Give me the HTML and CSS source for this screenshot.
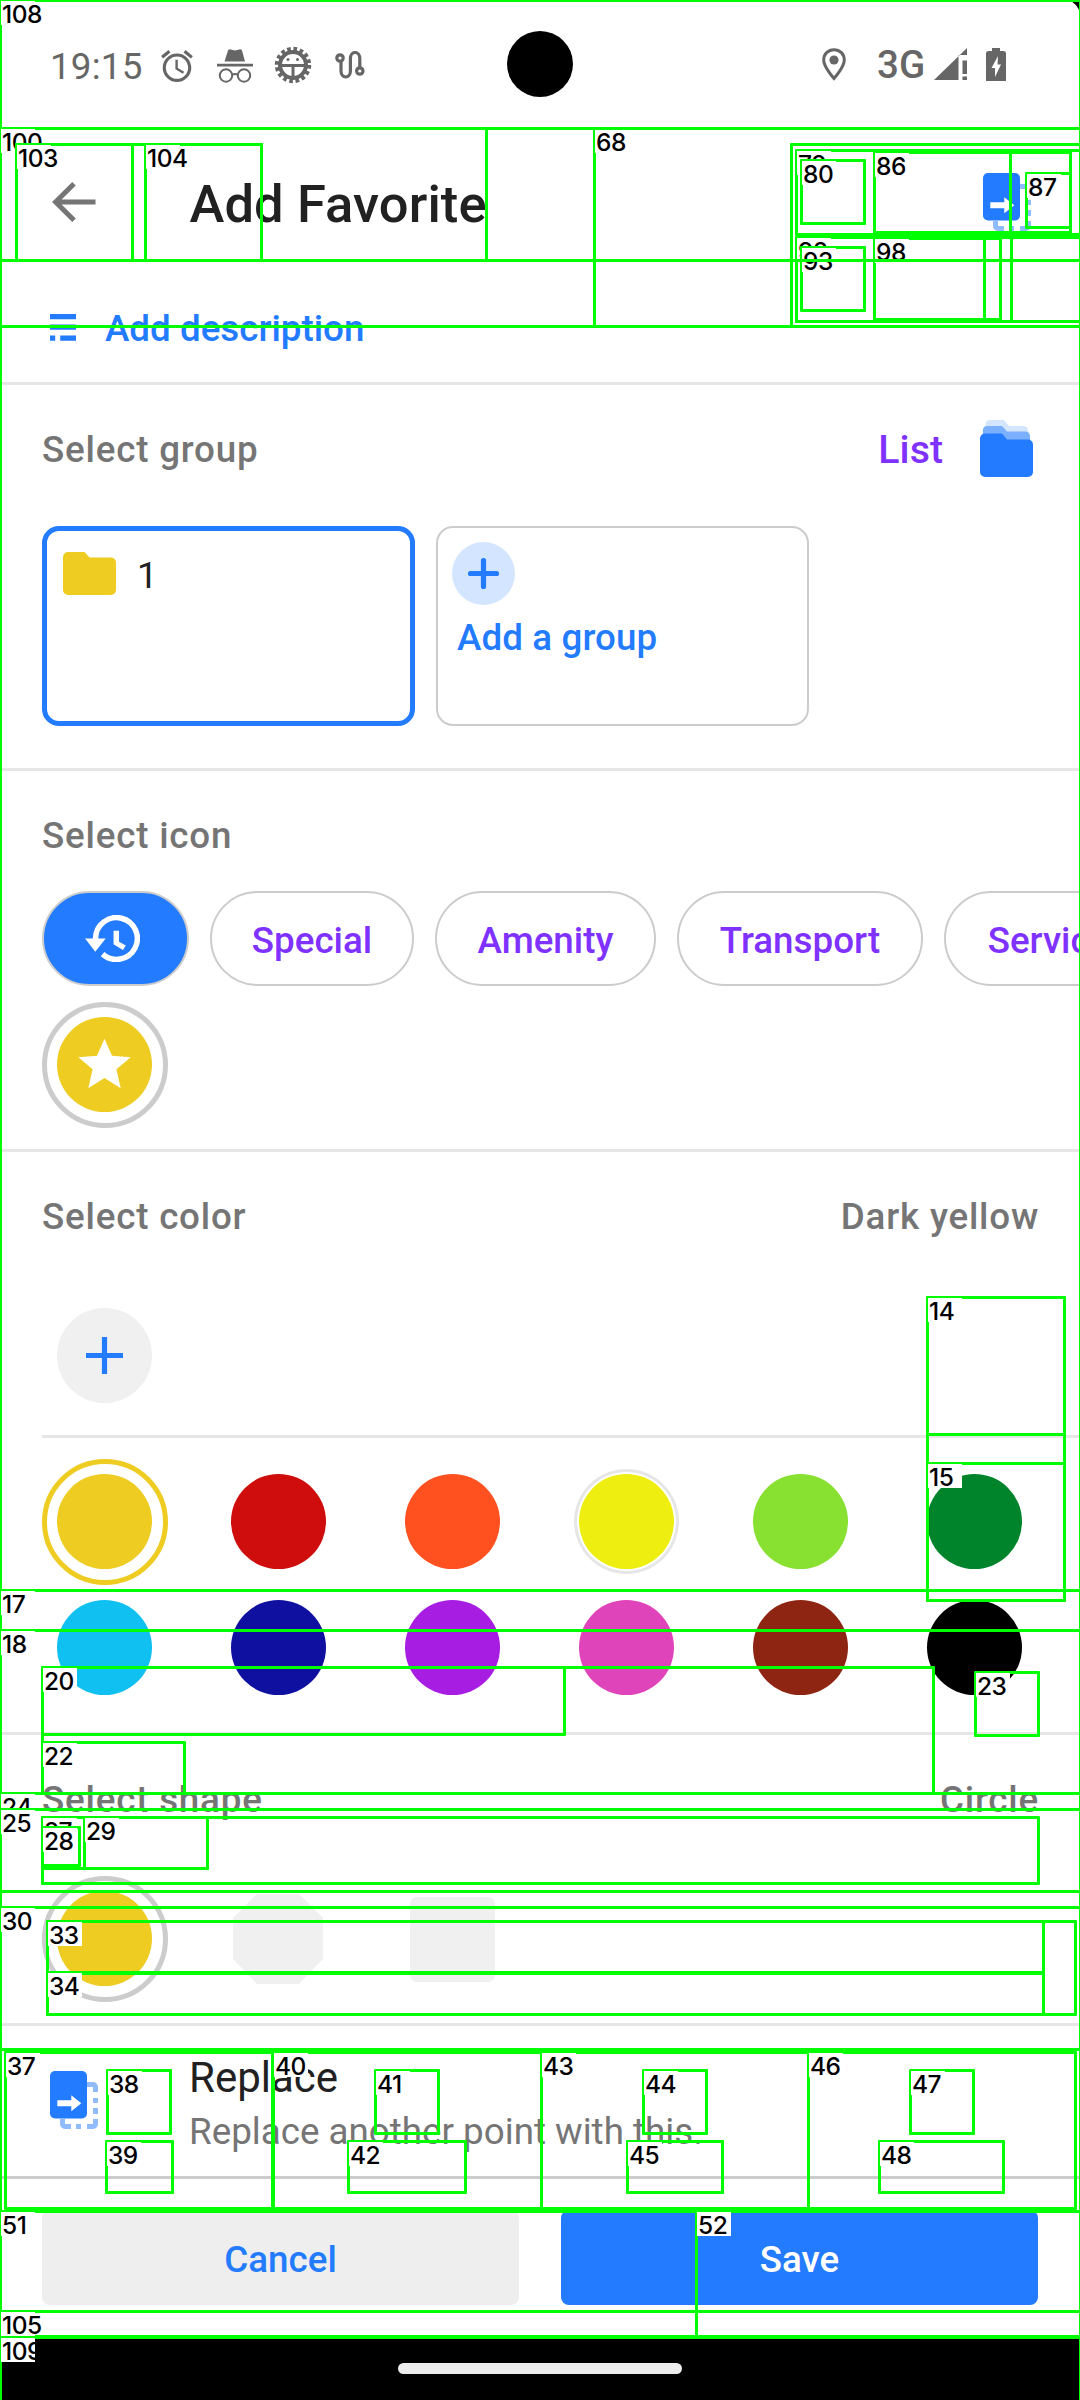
FILE: index.html
```
<!DOCTYPE html>
<html lang="en">
<head>
<meta charset="utf-8">
<title>Add Favorite</title>
<link rel="stylesheet" href="styles.css">
</head>
<body>
<svg class="defs" aria-hidden="true">
  <symbol id="replace" viewBox="0 0 48 58">
    <g fill="#90bcff"><path d="M37 11h6a5 5 0 0 1 5 5v5h-5v-5h-6zM43 27h5v5h-5zM43 37h5v6h-5zM43 48h5v5a5 5 0 0 1-5 5h-6v-5h6zM26 53h5v5h-5zM10 48h5v5h6v5h-6a5 5 0 0 1-5-5z"/></g>
    <rect width="37" height="47.5" rx="5" fill="#237bff"/>
    <path d="M7.3 29.3h14V24.3l10 8-10 8v-5h-14z" fill="#fff"/>
  </symbol>
</svg>

<div class="screen">
  <header class="status">
    <span class="time">19:15</span>
    <svg class="alarm" viewBox="2 1.86 20 20.14" width="32" height="32"><path d="M22 5.72l-4.6-3.86-1.29 1.53 4.6 3.86L22 5.72zM7.88 3.39L6.6 1.86 2 5.71l1.29 1.53 4.59-3.85zM12.5 8H11v6l4.75 2.85.75-1.23-4-2.37V8zM12 4c-4.97 0-9 4.03-9 9s4.02 9 9 9c4.97 0 9-4.03 9-9s-4.03-9-9-9zm0 16c-3.87 0-7-3.13-7-7s3.13-7 7-7 7 3.13 7 7-3.13 7-7 7z"/></svg>
    <svg class="incognito" viewBox="0 0 36 34" width="36" height="34"><path d="M11 1.6q.8-1.6 2.6-1.2l4.4 1 4.4-1q1.8-.4 2.6 1.2L28 12.6H7.5zM0 14.7h36v2.8H0z"/><g fill="none" stroke="#666" stroke-width="2"><circle cx="9" cy="26.5" r="6.2"/><circle cx="27" cy="26.5" r="6.2"/><path d="M15 26q3-1.8 6 0"/></g></svg>
    <svg class="bug" viewBox="0 0 38 38" width="38" height="38"><g fill="none" stroke="#666"><circle cx="19" cy="19" r="16" stroke-width="4.4" stroke-dasharray="3.6 2.68"/><circle cx="19" cy="19" r="13" stroke-width="4"/><path d="M5 19.5h28M19 19.5V34" stroke-width="3"/></g><circle cx="14" cy="13.5" r="1.5"/><circle cx="23.5" cy="13.5" r="1.5"/></svg>
    <svg class="route" viewBox="0 0 30 28" width="30" height="28"><g fill="none" stroke="#666" stroke-width="3.2"><circle cx="5" cy="7" r="3.2"/><path d="M6 10V20a4.7 6 0 0 0 9.4 0V7.5a4.7 6 0 0 1 9.4 0V17"/><circle cx="24.8" cy="20" r="3.2"/></g></svg>
    <span class="spacer"></span>
    <svg class="pin" viewBox="0 0 24 33" width="24" height="33"><path d="M12 1.7C6 1.7 1.7 6.2 1.7 12 1.7 19 12 30.5 12 30.5S22.3 19 22.3 12C22.3 6.2 18 1.7 12 1.7z" fill="none" stroke="#666" stroke-width="3"/><circle cx="12" cy="12" r="4.6"/></svg>
    <span class="net">3G</span>
    <svg class="signal" viewBox="0 0 33 32" width="33" height="32"><path d="M0 32L33 0V7H24.5V32zM28.5 12.5h4.5V26h-4.5zM28.5 28.5h4.5V32h-4.5z"/></svg>
    <svg class="battery" viewBox="0 0 20 33" width="20" height="33"><path d="M6 0h8v3h3.5A2.5 2.5 0 0 1 20 5.5V33H0V5.5A2.5 2.5 0 0 1 2.5 3H6z"/><path d="M12 8L5.500 20H9v9l6-12.5h-3.5z" fill="#fff"/></svg>
    <span class="camera"></span>
    <svg class="corner" viewBox="0 0 12 14" width="12" height="14"><path d="M0 0H12V14Q10.5 3.5 0 0z" fill="#000"/></svg>
  </header>

  <div class="toolbar">
    <svg viewBox="0 0 44 40" width="44" height="40"><path d="M43.5 20H4M22 1.800L3.600 20 22 38.200" fill="none" stroke="#757575" stroke-width="5"/></svg>
    <h1>Add Favorite</h1>
    <svg class="toolbar-action" width="48" height="58"><use href="#replace"/></svg>
  </div>

  <div class="describe">
    <svg viewBox="0 0 26 27" width="26" height="27"><path d="M0 0h26v5.2H0zM0 10.5h26v5.2H0zM0 21.5h5.2v5.2H0zM10.2 21.5H26v5.2H10.2z" fill="#237bff"/></svg>
    <span>Add description</span>
  </div>

  <section class="group">
    <div class="head">
      <h2>Select group</h2>
      <div class="list">List
        <svg viewBox="0 0 53 57" width="53" height="57"><path d="M10 0h14l5 6h14q5 0 5 5v10H5.500V5Q5.500 0 10 0z" fill="#d3e5ff"/><path d="M7.500 6H22l5 5.500h18q5 0 5 5V26H2.800V11q0-5 4.700-5z" fill="#7bb0ff"/><path d="M5 13.500h17l5 6h21a5 5 0 0 1 5 5V52a5 5 0 0 1-5 5H5a5 5 0 0 1-5-5V18.500a5 5 0 0 1 5-5z" fill="#237bff"/></svg>
      </div>
    </div>
    <div class="cards">
      <div class="card selected">
        <div class="card-row">
          <svg viewBox="0 0 53 43" width="53" height="43"><path d="M5 0h16.500l5 5.500H48a5 5 0 0 1 5 5V38a5 5 0 0 1-5 5H5a5 5 0 0 1-5-5V5a5 5 0 0 1 5-5z" fill="#eecc22"/></svg>
          <span>1</span>
        </div>
      </div>
      <div class="card add">
        <svg viewBox="0 0 63 63" width="63" height="63"><circle cx="31.5" cy="31.5" r="31.5" fill="#d3e5ff"/><path d="M18.500 31.500h26M31.500 18.500v26" stroke="#237bff" stroke-width="5.2" stroke-linecap="round"/></svg>
        <span>Add a group</span>
      </div>
    </div>
  </section>

  <section class="icons">
    <div class="head"><h2>Select icon</h2></div>
    <div class="chips">
      <div class="chip on"><svg viewBox="1 3 21 18" width="55" height="47"><path d="M5 12.500V12A8 8 0 1 1 7.700 18" fill="none" stroke="#fff" stroke-width="2.1"/><path d="M1 12h7.900L4.900 17.100zM11.900 9H14v4.200l2.600 1.500-1.100 1.700-3.600-2.200z" fill="#fff"/></svg></div>
      <div class="chip special">Special</div>
      <div class="chip amenity">Amenity</div>
      <div class="chip transport">Transport</div>
      <div class="chip service">Service</div>
    </div>
    <div class="ring"><svg class="dot yellow" viewBox="0 0 95 95" width="95" height="95"><path d="M47.500 21.700l7.500 17 18.700 1.600-14.300 12 4.300 18.900-16.200-10.200-16.200 10.200 4.300-18.900-14.300-12 18.700-1.600z" fill="#fff"/></svg></div>
  </section>

  <section class="colors">
    <div class="head"><h2>Select color</h2><h2>Dark yellow</h2></div>
    <div class="custom">
      <div class="cell"><svg class="dot grey" viewBox="0 0 95 95" width="95" height="95"><path d="M29 47.500h37M47.500 29v37" stroke="#237bff" stroke-width="5.2"/></svg></div>
    </div>
    <div class="inner-line"></div>
    <div class="palette">
      <div class="cell picked"><i class="dot yellow"></i></div>
      <div class="cell"><i class="dot red"></i></div>
      <div class="cell"><i class="dot orange"></i></div>
      <div class="cell"><i class="dot lemon"></i></div>
      <div class="cell"><i class="dot lime"></i></div>
      <div class="cell"><i class="dot green"></i></div>
      <div class="cell"><i class="dot sky"></i></div>
      <div class="cell"><i class="dot navy"></i></div>
      <div class="cell"><i class="dot purple"></i></div>
      <div class="cell"><i class="dot pink"></i></div>
      <div class="cell"><i class="dot brown"></i></div>
      <div class="cell"><i class="dot black"></i></div>
    </div>
  </section>

  <section class="shapes">
    <div class="head"><h2>Select shape</h2><h2>Circle</h2></div>
    <div class="palette">
      <div class="ring"><i class="dot yellow"></i></div>
      <div class="cell"><svg class="octagon" viewBox="0 0 90 90" width="90" height="90"><path d="M24 0H66L90 24V65L66 90H24L0 65V24z" fill="#f0f0f0"/></svg></div>
      <div class="cell"><i class="square"></i></div>
    </div>
  </section>

  <div class="replace">
    <svg width="48" height="58"><use href="#replace"/></svg>
    <div><p class="replace-title">Replace</p><p class="replace-sub">Replace another point with this.</p></div>
  </div>

  <footer class="actions">
    <button class="cancel">Cancel</button>
    <button class="save">Save</button>
  </footer>
  <nav class="navbar"><span></span></nav>

  <!-- Numbered view bounds: x, y, width, height -->
  <div class="bounds">
    <div class="b" style="--x:0;--y:0;--w:1081;--h:128"><b>108</b></div>
    <div class="b" style="--x:0;--y:128;--w:1081;--h:2209"></div>
    <div class="b" style="--x:927;--y:1297;--w:138;--h:137"><b>14</b></div>
    <div class="b" style="--x:927;--y:1434;--w:138;--h:166"></div>
    <div class="b" style="--x:927;--y:1463;--w:138;--h:137"><b>15</b></div>
    <div class="b" style="--x:0;--y:1590;--w:1081;--h:747"><b>17</b></div>
    <div class="b" style="--x:0;--y:1630;--w:1081;--h:163"><b>18</b></div>
    <div class="b" style="--x:42;--y:1667;--w:892;--h:126"></div>
    <div class="b" style="--x:42;--y:1667;--w:523;--h:67"><b>20</b></div>
    <div class="b" style="--x:42;--y:1742;--w:143;--h:51"><b>22</b></div>
    <div class="b" style="--x:975;--y:1672;--w:64;--h:63"><b>23</b></div>
    <div class="b" style="--x:0;--y:1793;--w:1081;--h:114"><b>24</b></div>
    <div class="b" style="--x:0;--y:1809;--w:1081;--h:82"><b>25</b></div>
    <div class="b" style="--x:42;--y:1817;--w:997;--h:66"></div>
    <div class="b" style="--x:42;--y:1817;--w:166;--h:51"><b>27</b></div>
    <div class="b" style="--x:42;--y:1827;--w:38;--h:38"><b>28</b></div>
    <div class="b" style="--x:84;--y:1817;--w:124;--h:51"><b>29</b></div>
    <div class="b" style="--x:0;--y:1907;--w:1081;--h:142"><b>30</b></div>
    <div class="b" style="--x:47;--y:1921;--w:1029;--h:93"></div>
    <div class="b" style="--x:47;--y:1921;--w:997;--h:52"><b>33</b></div>
    <div class="b" style="--x:47;--y:1972;--w:997;--h:42"><b>34</b></div>
    <div class="b" style="--x:0;--y:2049;--w:1081;--h:162"></div>
    <div class="b" style="--x:5;--y:2052;--w:268;--h:156"><b>37</b></div>
    <div class="b" style="--x:107;--y:2070;--w:64;--h:63"><b>38</b></div>
    <div class="b" style="--x:106;--y:2141;--w:67;--h:51"><b>39</b></div>
    <div class="b" style="--x:273;--y:2052;--w:269;--h:156"><b>40</b></div>
    <div class="b" style="--x:375;--y:2070;--w:64;--h:63"><b>41</b></div>
    <div class="b" style="--x:348;--y:2141;--w:118;--h:51"><b>42</b></div>
    <div class="b" style="--x:541;--y:2052;--w:268;--h:156"><b>43</b></div>
    <div class="b" style="--x:643;--y:2070;--w:64;--h:63"><b>44</b></div>
    <div class="b" style="--x:627;--y:2141;--w:96;--h:51"><b>45</b></div>
    <div class="b" style="--x:808;--y:2052;--w:268;--h:156"><b>46</b></div>
    <div class="b" style="--x:910;--y:2070;--w:64;--h:63"><b>47</b></div>
    <div class="b" style="--x:879;--y:2141;--w:125;--h:51"><b>48</b></div>
    <div class="b" style="--x:0;--y:2211;--w:1081;--h:100"><b>51</b></div>
    <div class="b" style="--x:696;--y:2211;--w:385;--h:125"><b>52</b></div>
    <div class="b" style="--x:594;--y:128;--w:487;--h:198"><b>68</b></div>
    <div class="b" style="--x:0;--y:128;--w:1081;--h:198"></div>
    <div class="b" style="--x:791;--y:144;--w:290;--h:182"></div>
    <div class="b" style="--x:796;--y:150;--w:285;--h:84"><b>79</b></div>
    <div class="b" style="--x:801;--y:160;--w:64;--h:63"><b>80</b></div>
    <div class="b" style="--x:874;--y:152;--w:197;--h:80"></div>
    <div class="b" style="--x:874;--y:152;--w:137;--h:80"><b>86</b></div>
    <div class="b" style="--x:1026;--y:173;--w:45;--h:54"><b>87</b></div>
    <div class="b" style="--x:796;--y:237;--w:216;--h:84"></div>
    <div class="b" style="--x:796;--y:237;--w:285;--h:84"><b>92</b></div>
    <div class="b" style="--x:801;--y:247;--w:64;--h:63"><b>93</b></div>
    <div class="b" style="--x:874;--y:238;--w:127;--h:81"></div>
    <div class="b" style="--x:874;--y:238;--w:111;--h:81"><b>98</b></div>
    <div class="b" style="--x:0;--y:128;--w:487;--h:132"><b>100</b></div>
    <div class="b" style="--x:0;--y:260;--w:1081;--h:66"></div>
    <div class="b" style="--x:16;--y:144;--w:246;--h:116"></div>
    <div class="b" style="--x:16;--y:144;--w:117;--h:116"><b>103</b></div>
    <div class="b" style="--x:145;--y:144;--w:117;--h:116"><b>104</b></div>
    <div class="b" style="--x:0;--y:2311;--w:1081;--h:25"><b>105</b></div>
    <div class="b" style="--x:0;--y:2337;--w:1081;--h:64"><b>109</b></div>
  </div>
</div>
</body>
</html>
```
FILE: styles.css
```
* { box-sizing: border-box; }
body { margin: 0; background: #fff; font-family: Roboto, "Noto Sans", sans-serif; font-size: 36.75px; font-weight: 500; }
h1, h2, p { margin: 0; font-weight: 500; }
svg { display: block; flex: none; }
.defs { width: 0; height: 0; position: absolute; }
.screen { position: relative; width: 1080px; height: 2400px; overflow: hidden; display: flex; flex-direction: column; background: #fff; }

/* Status bar */
.status { position: relative; height: 128px; padding: 4px 74px 0 50px; display: flex; align-items: center; color: #666; fill: #666; line-height: 44px; }
.time { font-weight: 400; letter-spacing: .2px; width: 92px; padding-top: 1px; }
.alarm { margin-left: 19px; }
.incognito { margin-left: 24px; }
.bug { margin-left: 20.5px; margin-top: -3px; }
.route { margin-left: 23.5px; margin-top: -3px; }
.spacer { flex: 1; }
.pin, .signal, .battery { margin-top: -4px; }
.pin { margin-right: 1px; }
.net { width: 48px; margin: -2px 0 0 30px; font-size: 38.5px; }
.signal { margin-left: 9px; }
.battery { margin-left: 19px; }
.camera { position: absolute; left: 507px; top: 31px; width: 66px; height: 66px; border-radius: 50%; background: #000; }
.corner { position: absolute; right: 0; top: 0; }

/* Toolbar */
.toolbar { height: 147px; padding: 0 49px 0 51.5px; display: flex; align-items: center; }
.toolbar h1 { flex: 1; margin-left: 94px; padding-top: 4px; font-size: 52.5px; line-height: 64px; letter-spacing: .1px; color: #212121; }
.describe { height: 110px; padding-left: 50px; display: flex; align-items: center; gap: 29px; color: #237bff; border-bottom: 3px solid #e6e6e6; }
.describe svg { margin-top: -3px; }

/* Sections */
section { padding: 0 0 21px 42px; border-bottom: 3px solid #e6e6e6; }
.head { height: 128px; padding-right: 41px; display: flex; align-items: center; justify-content: space-between; }
h2 { font-size: 36.75px; line-height: 44px; padding-top: 2px; letter-spacing: .8px; color: #757575; }
.group { padding-bottom: 42px; }
.list { display: flex; align-items: center; gap: 37px; margin-right: 6px; padding-top: 1px; font-size: 39.375px; line-height: 46px; color: #7f32ff; }
.list svg { margin-top: -3px; }
.cards { display: flex; gap: 21px; margin-top: 13px; }
.card { width: 373px; height: 200px; border: 2px solid #ccc; border-radius: 17px; }
.selected { border: 5px solid #237bff; padding-left: 16px; }
.card-row { height: 86px; display: flex; align-items: center; gap: 21px; color: #212121; font-weight: 400; line-height: 44px; }
.card-row svg { margin-top: -1px; }
.card-row span { padding-top: 3px; }
.add { padding: 14px 0 0 13.5px; color: #237bff; line-height: 43px; }
.add span { display: block; margin: 11px 0 0 5.5px; letter-spacing: .1px; }

.icons .head { height: 120px; padding-top: 8px; }
.chips { display: flex; gap: 21px; overflow: hidden; }
.chip { flex: none; height: 95px; border: 2px solid #ccc; border-radius: 48px; display: flex; align-items: center; justify-content: center; padding-top: 4px; line-height: 44px; color: #7f32ff; }
.on { width: 147px; padding: 0 6px 0 0; background: #237bff; }
.special { width: 204px; }
.amenity { width: 221px; }
.transport { width: 246px; }
.service { width: 209px; }
.ring, .cell { width: 126px; height: 126px; display: flex; align-items: center; justify-content: center; }
.ring { border: 5px solid #ccc; border-radius: 50%; }
.picked { border: 5px solid #eecc22; border-radius: 50%; }
.icons .ring { margin-top: 16px; }

.custom { margin-top: 13px; }
.inner-line { height: 3px; margin: 16px 0 21px; background: #e6e6e6; }
.palette { display: grid; grid-template-columns: repeat(6, 126px); column-gap: 48px; }
.dot { width: 95px; height: 95px; border-radius: 50%; margin: -1px 2px 0 0; }
.yellow { background: #eecc22; }
.grey { background: #f0f0f0; }
.red { background: #d00d0d; }
.orange { background: #ff5020; }
.lemon { background: #eeee10; box-shadow: 0 0 0 2px #fff, 0 0 0 5px #e6e6e6; }
.lime { background: #88e030; }
.green { background: #00842b; }
.sky { background: #10c0f0; }
.navy { background: #1010a0; }
.purple { background: #a71de1; }
.pink { background: #e044bb; }
.brown { background: #8e2512; }
.black { background: #000; }
.shapes .palette { margin-top: 13px; }
.octagon { margin-right: 2px; }
.square { width: 85px; height: 85px; margin-right: 2px; border-radius: 7px; background: #f0f0f0; }

/* Replace row */
.replace { height: 153px; padding: 24px 0 0 50px; display: flex; gap: 91px; border-bottom: 3px solid #ccc; }
.replace svg { margin-top: 21px; }
.replace p { font-weight: 400; }
.replace-title { font-size: 42px; line-height: 56px; color: #212121; }
.replace-sub { line-height: 52px; color: #757575; }

/* Bottom buttons and navigation bar */
.actions { height: 158px; padding: 31px 42px 0; display: grid; grid-template-columns: 1fr 1fr; gap: 42px; }
.actions button { height: 95px; border: 0; border-radius: 8px; padding: 3px 0 0; font: inherit; }
.cancel { background: #eee; color: #237bff; }
.save { background: #237bff; color: #fff; }
.navbar { flex: 1; padding-top: 26px; display: flex; justify-content: center; background: #000; }
.navbar span { width: 284px; height: 11px; border-radius: 6px; background: #ececec; }

/* View bounds drawn over the screen */
.bounds { position: absolute; inset: 0; overflow: hidden; }
.b { position: absolute; left: calc(var(--x) * 1px - 1px); top: calc(var(--y) * 1px - 1px); width: calc(var(--w) * 1px + 2px); height: calc(var(--h) * 1px + 3px); border: 3px solid #0f0; border-radius: 1px; }
.b b { position: absolute; left: -1px; top: -1px; width: 34px; height: 24px; padding-left: 1px; background: #fff; color: #000; font: 500 24.5px/26px Inter, sans-serif; letter-spacing: -.5px; white-space: nowrap; }
```
